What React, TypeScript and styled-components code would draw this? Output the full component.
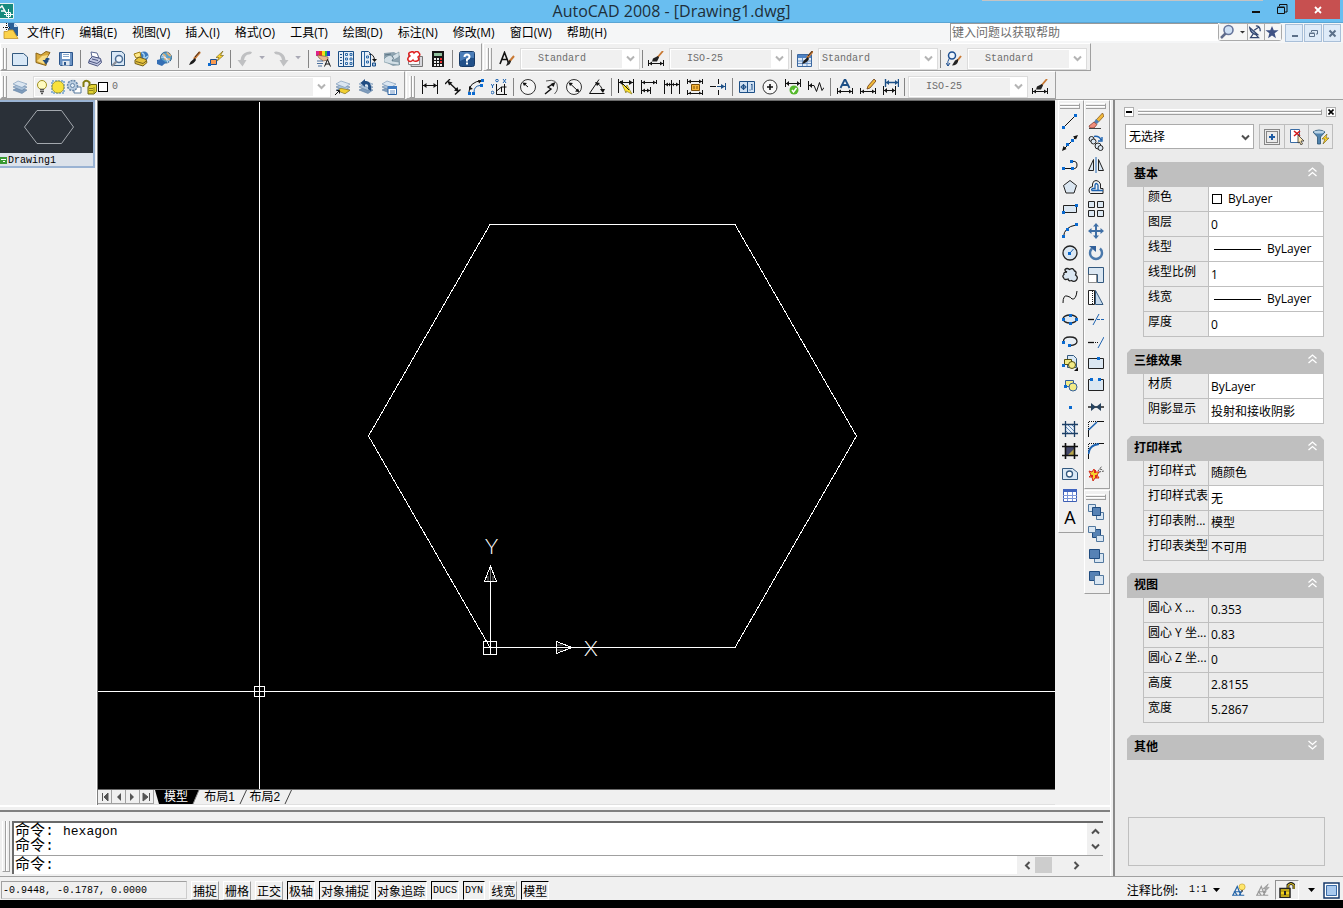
import React from 'react';
import styled, { createGlobalStyle, css } from 'styled-components';

const ui = '"Open Sans", "Noto Sans CJK SC", sans-serif';
const mono = '"Liberation Mono", "Noto Sans CJK SC", monospace';
const song = '"Noto Sans CJK SC", sans-serif';
const face = '#f0f0f0';
const edge = '#a0a0a0';

const GlobalStyle = createGlobalStyle`
  * { box-sizing: border-box; }
  html, body { margin: 0; padding: 0; background: ${face}; }
  button, input, select { font: inherit; color: inherit; margin: 0; padding: 0; border-radius: 0; }
  svg { display: block; flex: none; }
`;

/* ---------- icon drawings, all on a 16 x 16 grid ---------- */

const sheet = { fill: '#d9e8f6', stroke: '#33597f' };
const ink = { fill: 'none', stroke: '#111' };
const blue = { fill: 'none', stroke: '#1c62b0' };
const dot = (x: number, y: number) => (
  <rect key={`${x}-${y}`} x={x} y={y} width="3" height="3" fill="#0a6ad0" />
);
const brush = (
  <>
    <path d="M15 1L9 8" stroke="#c87832" strokeWidth="2.4" />
    <path d="M14.5 .8L10 6" stroke="#3a2a20" strokeWidth="1" />
    <path d="M10 7L7.600 9Q5.500 10 4 14Q9 13 11 9z" fill="#1b1b1b" />
  </>
);
const layers = (
  <>
    <path d="M1 11l5-2.500 9 2.500-5 3.500z" fill="#7f9cbc" stroke="#5f7fa3" strokeWidth=".6" />
    <path d="M1 8l5-2.500 9 2.500-5 3.500z" fill="#a9c0d8" stroke="#5f7fa3" strokeWidth=".6" />
    <path d="M1 5l5-3 9 3-5 3.500z" fill="#dbe6f1" stroke="#7090b2" strokeWidth=".6" />
  </>
);
const dimArrow = (
  <>
    <path d="M.5 9v6M15.500 9v6M1 12.500h14" {...ink} />
    <path d="M1 12.500l3-2v4zM15 12.500l-3-2v4z" fill="#111" />
  </>
);
const cloud =
  'M5 5Q2.500 4 3 2.500Q5 .5 7.500 2.500Q11 0 12.500 4Q15 4.500 13.500 8Q16.500 10 14.500 13Q12 15.500 9.500 13.500Q6.500 14.500 6 12Q2 13.500 1.500 10.500Q0 9 2 7.500Q1 5 5 5z';

const icons: Record<string, React.ReactNode> = {
  fresh: <path d="M.5 2.500h11l4 3.500v8.500H.5z" {...sheet} />,
  open: (
    <>
      <path d="M1 2l5 2 5-3.500 4 1-3 5-1 8-10-3z" fill="#d7a83a" stroke="#8a6418" />
      <path d="M2 10l5-5 6-1-4 9z" fill="#f7dc87" />
      <path d="M15 8q-4-3-5 1H7.500l3.500 4.500L14 9.500h-1.500z" fill="#244d7e" />
    </>
  ),
  save: (
    <>
      <path d="M1.500 1.500h13v13h-12l-1-1z" fill="#6b93c4" stroke="#2c568c" />
      <path d="M4 2h8v6H4z" fill="#fff" />
      <path d="M5 3.500h6M5 5.500h6" stroke="#8aa9cc" />
      <path d="M4.500 10h7v4.500h-7z" fill="#dfe7f0" />
      <path d="M6 11h2v3H6z" fill="#2c568c" />
    </>
  ),
  print: (
    <>
      <path d="M4 1l6 1 2 5-7-1z" fill="#fff" stroke="#5d6a92" />
      <path d="M2.500 8.500l3-3 8 2 1 4-4 3.500-9-3z" fill="#c3c9e2" stroke="#4a5480" />
      <path d="M2 10l8 2.500 4-3M5 8l6 1.500" stroke="#4a5480" fill="none" />
    </>
  ),
  preview: (
    <>
      <path d="M1.500 .5h10l3 2.500v11.500h-13z" {...sheet} />
      <circle cx="9" cy="8" r="3.500" fill="#eef6fd" stroke="#4b6d95" strokeWidth="1.500" />
      <path d="M6.500 10.500L2 15" stroke="#8b8f99" strokeWidth="2.400" />
    </>
  ),
  publish: (
    <>
      <circle cx="11" cy="5" r="4.500" fill="#3c78bb" />
      <path d="M9 2q3 1 2 4t4-1" stroke="#a6d3f0" strokeWidth="1.500" fill="none" />
      <path d="M1 3l6-2 1 5-5 1z" fill="#ffe98a" stroke="#a07d10" />
      <path d="M2 9l4-3 7 2.500 1 3-4 3.500-8-2.500z" fill="#e6c33e" stroke="#75601c" />
      <path d="M3 10.500l7 2 4-3" stroke="#75601c" fill="none" />
    </>
  ),
  web: (
    <>
      <circle cx="10" cy="6.500" r="5.500" fill="#58a1cc" stroke="#35688f" />
      <path d="M7 3q3 2 2 4t5 1M11 1.500q2 3 4 3" fill="none" stroke="#d8b17d" strokeWidth="2" />
      <path d="M5 6q6 0 9 5M6 4q5 2 6 8" stroke="#eef" fill="none" strokeWidth=".8" />
      <path d="M1 9l4-1 5 3.500-4 3.500-5-2z" fill="#356fb5" />
    </>
  ),
  match: brush,
  block: (
    <>
      <path d="M15 0L8 6.500h3L8.500 10.500 15.500 4.500h-3z" fill="#ffd42a" stroke="#6d5a10" strokeWidth=".6" />
      <path d="M2.500 8.500h6v5h-6z" fill="#f79a50" stroke="#1d4f91" />
      {dot(0, 12)}
    </>
  ),
  undo: <path d="M15 1.500Q14 0 10 1 4 3 3.500 9H.5l5 6.500L9.500 9H7Q8 3.500 12 3.500q2 0 3-2z" fill="#bfc0c2" />,
  redo: <path d="M1 1.500Q2 0 6 1q6 2 6.500 8h3l-5 6.500L6.500 9H9Q8 3.500 4 3.500q-2 0-3-2z" fill="#bfc0c2" />,
  caret: <path d="M4 5h7l-3.500 4z" fill="#a9a9b5" />,
  properties: (
    <>
      <path d="M1 0h3v5H1z" fill="#e0218a" />
      <path d="M4 0h3v5H4z" fill="#e53a1e" />
      <path d="M7 0h3v5H7z" fill="#f3e11b" />
      <path d="M10 0h2v5h-2z" fill="#27b34b" />
      <path d="M12 0h3v5h-3z" fill="#2336d8" />
      <path d="M2 4l6 1 5 1v3l-5 1-4-3z" fill="#e9b98f" stroke="#6a4a36" strokeWidth=".6" />
      <path d="M2 10h6M2 12.500h6M3 15h4" stroke="#4a6f9d" />
      <path d="M9.500 15.500l3-7 3 7M10.500 13h4" {...ink} />
    </>
  ),
  center: (
    <>
      <path d="M.5.5h15v15H.5z" fill="#e7eff8" stroke="#1c4f86" />
      <path d="M5.500 1v14" stroke="#1c4f86" />
      <path d="M2 3.500h2M2 6.500h2M2 9.500h2M2 12.500h2" stroke="#1c4f86" />
      <path d="M7.500 2.500h2v2h-2zM12 2.500h2v2h-2zM7.500 7h2v2h-2zM12 7h2v2h-2zM7.500 11.500h2v2h-2zM12 11.500h2v2h-2z" fill="none" stroke="#2f6ba8" />
    </>
  ),
  palettes: (
    <>
      <path d="M.5.5h7l2 2v13h-9z" fill="#e7eff8" stroke="#1c4f86" />
      <path d="M3.500 1v14M5.500 5h2v2h-2zM5.500 10h2v2h-2z" fill="none" stroke="#2f6ba8" />
      <path d="M8 3q5 0 5.500 6" {...ink} />
      <path d="M11 8h5l-2.500 3z" fill="#111" />
      <path d="M11.500 12h3v3h-3z" fill="#9ec0e3" stroke="#1c4f86" />
    </>
  ),
  sheets: (
    <>
      <path d="M0 2l10-1 6 4v9l-7 1-9-5z" fill="#8fa3b0" />
      <path d="M0 8q4-5 8-3l7-4v5L8 10l7 1v3l-8-1-7-2z" fill="#d3dfe6" stroke="#63808f" strokeWidth=".5" />
      <path d="M8 5q3 2 0 5M1 4l6-1" stroke="#5b7484" fill="none" />
    </>
  ),
  markup: (
    <>
      <path d="M4.500 5.500h11v10H4z" fill="#d7d7dc" stroke="#777" />
      <path d="M1.500 3v10.500h11V3z" fill="#fafafa" stroke="#888" />
      <path d="M3 5q-3-3 1-4 2-1 3 1 3-3 5 0 2 2-1 4 2 3-1 4-3 1-4-1-3 3-5 0-1-2 2-4z" fill="#fff" stroke="#e02020" strokeWidth="1.500" />
    </>
  ),
  calc: (
    <>
      <path d="M2 0h12v16H2z" fill="#161616" />
      <path d="M4 2h8v3H4z" fill="#8fbf9c" />
      <path d="M4 7h2v2H4zM7 7h2v2H7zM4 10h2v2H4zM7 10h2v2H7zM4 13h2v2H4zM7 13h2v2H7zM10 13h2v2h-2z" fill="#eee" />
      <path d="M10 7h2v2h-2zM10 10h2v2h-2z" fill="#e33" />
    </>
  ),
  help: (
    <>
      <rect x=".5" y=".5" width="15" height="15" rx="2" fill="#215089" stroke="#173a66" />
      <path d="M1 1h14v6Q8 6 1 10z" fill="#4a7db8" />
      <path d="M5.500 6Q5.500 3.500 8 3.500T10.500 6Q10.500 7.500 8 8.500V10.500M8 11.500v2" fill="none" stroke="#fff" strokeWidth="2" />
    </>
  ),
  textStyle: (
    <>
      <path d="M1 13L5.500 1.500 10 13M2.500 8.500h6" {...ink} strokeWidth="1.600" />
      <path d="M15 5l-5 6" stroke="#c87832" strokeWidth="2" />
      <path d="M11 9l-2 1.500-2 4.500q4-1 5-4.500z" fill="#222" />
    </>
  ),
  dimStyle: (
    <>
      <path d="M15 0L9 7" stroke="#c87832" strokeWidth="1.800" />
      <path d="M10 5L5 7.500 4 10.500h5l2-4z" fill="#222" />
      {dimArrow}
    </>
  ),
  tableStyle: (
    <>
      <path d="M.5 3.500h14v12H.5z" fill="#dfeaf7" stroke="#3c68a0" />
      <path d="M1 4h13v3H1z" fill="#4f83c4" />
      <path d="M5.500 7v8M10 7v8M1 10h13M1 12.500h13" stroke="#6d94c5" />
      <g transform="translate(1 -1)">{brush}</g>
    </>
  ),
  leaderStyle: (
    <>
      <circle cx="6" cy="4.500" r="3.500" fill="#eef5fc" stroke="#1d4f91" strokeWidth="1.500" />
      <path d="M3.500 7Q1 10 2 15M0 12l2 3 2-3" fill="none" stroke="#1d4f91" />
      <path d="M15 5l-4 5" stroke="#c87832" strokeWidth="2" />
      <path d="M12 8l-3 1.500-3 5q5 0 6-4z" fill="#222" />
    </>
  ),
  layers,
  bulb: (
    <>
      <circle cx="8" cy="6" r="4.500" fill="#fffbc0" stroke="#a09020" />
      <path d="M6 10.500h4M6 12.500h4M7 14.500h2" stroke="#555" strokeWidth="1.500" />
    </>
  ),
  sun: (
    <>
      <path d="M2 2h12v12H2z" fill="none" stroke="#2f7bbd" strokeDasharray="2 1" />
      <circle cx="8" cy="8" r="6" fill="#f8e23c" stroke="#9c9a3a" />
    </>
  ),
  freeze: (
    <>
      <path d="M8 8h7v6H8z" fill="#fff" stroke="#57789c" />
      <circle cx="6.500" cy="6.500" r="5" fill="#b9cde1" stroke="#6585a8" strokeDasharray="2 1" strokeWidth="1.500" />
      <circle cx="6.500" cy="6.500" r="2" fill="#e4eef7" stroke="#6585a8" />
    </>
  ),
  unlock: (
    <>
      <path d="M1.500 8V3.500Q4 0 7.500 3.500V8" fill="none" stroke="#817b10" strokeWidth="2" />
      <path d="M6 7.500l3-2h5.500v7L12 15H6z" fill="#e2d233" stroke="#6b6410" />
      <path d="M12 8v6M7 9.500h4M7 11.500h4" stroke="#8d851a" />
    </>
  ),
  layerCurrent: (
    <>
      {layers}
      <path d="M4 10.500l2-1.200 9 2-5 3.500-5-2z" fill="#f1cf32" stroke="#8c7416" strokeWidth=".6" />
      <path d="M0 16l4-4M1.500 11.500h3v3" {...ink} />
    </>
  ),
  layerPrevious: (
    <>
      {layers}
      <path d="M13 12Q14 1 7 2l0-2-4.500 4L7 8V5.500Q11 4 10 10z" fill="#204c82" />
    </>
  ),
  layerStates: (
    <>
      {layers}
      <path d="M7 7.500h8.500v8H7z" fill="#fff" stroke="#2a62a5" />
      <path d="M7 7h9v3H7z" fill="#3c78c0" />
      <path d="M9 12h5M9 14h5" stroke="#6d94c5" />
    </>
  ),
  linear: (
    <>
      <path d="M.5 1v14M15.500 1v14M1 6.500h14" {...ink} />
      <path d="M1 6.500L4.500 4v5zM15 6.500L11.500 4v5z" fill="#111" />
    </>
  ),
  aligned: (
    <>
      <path d="M0 5l5-5M10 15.500l5.500-5M3.500 3L13 12" {...ink} strokeWidth="1.300" />
      <path d="M2.500 2l5 1.500-3.500 3zM14 13L9 11.500 12.500 8z" fill="#111" />
    </>
  ),
  arcLength: (
    <>
      <path d="M1 13Q1 3 14 1.500" {...ink} />
      <path d="M6 13q0-6 6-6.500" {...blue} />
      <path d="M1 11l0-4 4 3zM10 1l4 .5-3 3z" fill="#111" />
      {dot(0, 13)}{dot(4, 13)}{dot(12, 5)}{dot(13, 0)}
    </>
  ),
  ordinate: (
    <>
      <path d="M5.500 5v10.500h10.500M5.500 12l5-4h5M10.500 8v5M13.500 5v10" {...ink} />
      <path d="M0 5l1.500 2L3 5M1.500 7v2M12 0l3 4M15 0l-3 4" {...blue} />
      <circle cx="1.500" cy="13.500" r="1.300" {...blue} />
      <circle cx="6" cy="1.500" r="1.300" {...blue} />
    </>
  ),
  radius: (
    <>
      <circle cx="8" cy="8" r="7.500" fill="#fff" fillOpacity=".4" stroke="#333" />
      <path d="M8 8L4 4.500" {...ink} />
      <path d="M2.500 3.500l4.500.5-3 3z" fill="#111" />
    </>
  ),
  jogged: (
    <>
      <path d="M3 2Q15-1 14.500 9q0 3-3 6" fill="none" stroke="#555" />
      <path d="M2 15l6-5-3-2 5-3" {...ink} strokeWidth="1.400" />
      <path d="M12.500 3l-2 5-3-3z" fill="#111" />
    </>
  ),
  diameter: (
    <>
      <circle cx="8" cy="8" r="7.500" fill="#fff" fillOpacity=".4" stroke="#333" />
      <path d="M4 4.500l8 7.500" {...ink} />
      <path d="M2.500 3.500l4.500.5-3 3zM13.500 13l-4.500-.5 3-3z" fill="#111" />
    </>
  ),
  angular: (
    <>
      <path d="M10 .5L.5 14.500h15M7 4q6 2 6.500 9" {...ink} />
      <path d="M6 3l5 1-3 3zM14 14l-3-4h5z" fill="#111" />
    </>
  ),
  quick: (
    <>
      <path d="M3 3l5 5 1-2 5 9-6-3 0 2z" fill="#ffe32d" stroke="#7c6d0d" strokeWidth=".6" />
      <path d="M.5 0v14M15.500 0v14M1 3.500h14M2 2l9 9" {...ink} />
      <path d="M1 3.500L5 1v5zM15 3.500L11 1v5z" fill="#111" />
    </>
  ),
  baseline: (
    <>
      <path d="M.5 1v14M15.500 1v4M1 3.500h14M9.500 8v7M1 11.500h8" {...ink} />
      <path d="M1 3.500l3-2v4zM15 3.500l-3-2v4zM1 11.500l3-2v4zM9 11.500l-3-2v4z" fill="#111" />
    </>
  ),
  continued: (
    <>
      <path d="M.5 1v14M7.500 1v14M15.500 1v14M1 5.500h14" {...ink} />
      <path d="M1 5.500l3-2v4zM7 5.500l-2-2v4zM8 5.500l2-2v4zM15 5.500l-3-2v4z" fill="#111" />
    </>
  ),
  space: (
    <>
      <path d="M.5 0v5M15.500 0v5M1 2.500h14M.5 11v5M15.500 11v5M1 14.500h14" {...ink} />
      <path d="M1 2.500l3-2v4zM15 2.500l-3-2v4zM1 14.500l3-2v3zM15 14.500l-3-2v3z" fill="#111" />
      <path d="M4.500 5.500h8v6h-8z" fill="#f5b53a" stroke="#7a4e09" />
      <path d="M7 7v3M10 7v3" stroke="#7a4e09" />
    </>
  ),
  breakDim: (
    <>
      <path d="M8.500 0v5M8.500 11v5M0 7.500h6" {...ink} />
      <path d="M7 7.500h8M15.500 4v7" stroke="#1c4f86" />
      <path d="M15 7.500l-4-2.500v5z" fill="#1c4f86" />
    </>
  ),
  tolerance: (
    <>
      <path d="M.5 2.500h15v11H.5z" fill="#cfe0f2" stroke="#1c4f86" />
      <path d="M8.500 3v10" stroke="#1c4f86" />
      <circle cx="4.500" cy="8" r="2" fill="none" stroke="#1c4f86" />
      <path d="M1.500 8h6M4.500 5v6M10.500 11h1M12 6l1-1v6" fill="none" stroke="#1c4f86" />
    </>
  ),
  centerMark: (
    <>
      <circle cx="8" cy="8" r="7" fill="#f8f8f8" stroke="#333" />
      <path d="M8 5v6M5 8h6" stroke="#111" strokeWidth="1.600" />
    </>
  ),
  inspect: (
    <>
      <path d="M.5 0v8M15.500 0v8M1 4.500h14" {...ink} />
      <path d="M1 4.500L4 2v5zM15 4.500L12 2v5z" fill="#111" />
      <circle cx="9" cy="11" r="4.500" fill="#54b82c" />
      <path d="M7 11l1.500 2 3-4" fill="none" stroke="#fff" strokeWidth="1.500" />
    </>
  ),
  jogLine: (
    <>
      <path d="M.5 2v9M1 6.500h5l2.500 6 3-9 2.500 8 2-3" {...ink} />
      <path d="M1 6.500L4 4v5z" fill="#111" />
    </>
  ),
  dimEdit: (
    <>
      <path d="M3.500 9L8 0l4.500 9M5 6h6" fill="none" stroke="#1c4f86" strokeWidth="1.800" />
      {dimArrow}
    </>
  ),
  dimTextEdit: (
    <>
      <path d="M14 0L8 7l-1 3 3-1 6-7z" fill="#f0b83a" stroke="#6a3b12" strokeWidth=".8" />
      {dimArrow}
    </>
  ),
  dimUpdate: (
    <>
      <path d="M2.500 0v8M15.500 0v8M3 3.500h12" fill="none" stroke="#1c4f86" strokeWidth="1.400" />
      <path d="M3 3.500L6 1v5zM15 3.500L12 1v5z" fill="#1c4f86" />
      <path d="M.5 7v9M12.500 7v9M1 11.500h11" {...ink} />
      <path d="M1 11.500L4 9v5zM12 11.500L9 9v5z" fill="#111" />
    </>
  ),
  line: <><path d="M2 14L14 2" {...ink} />{dot(0, 13)}{dot(12, 1)}</>,
  xline: (
    <>
      <path d="M1 15L15 1" {...ink} />
      <path d="M0 16l1.500-5 3 3zM16 0l-5 1.500 3 3z" fill="#111" />
      {dot(4, 8)}{dot(9, 4)}
    </>
  ),
  pline: (
    <>
      <path d="M1 11.500h8M10 4.500q5-1 5 3.500t-5 3.500" {...ink} />
      {dot(0, 10)}{dot(9, 10)}{dot(8, 3)}
    </>
  ),
  polygon: <path d="M8 1.500l6.500 5-2.500 7.500H4L1.500 6.500z" fill="#dbe7f2" stroke="#222" />,
  rect: <><path d="M1.500 4.500h13v7h-13z" fill="#dbe7f2" stroke="#222" />{dot(0, 10)}{dot(13, 3)}</>,
  arc: <><path d="M1.500 14Q2 4 14 2" {...ink} />{dot(0, 12)}{dot(4, 5)}{dot(13, 0)}</>,
  circle: (
    <>
      <circle cx="8" cy="8" r="7" fill="#dbe7f2" stroke="#222" strokeWidth="1.300" />
      <path d="M8 8l3.500-4" {...blue} />{dot(6, 7)}
    </>
  ),
  revcloud: <path d={cloud} fill="#dbe7f2" stroke="#222" strokeWidth="1.300" />,
  spline: <path d="M1 14Q1 6 5 7t5 3Q14 11 15 2" {...ink} />,
  ellipse: (
    <>
      <ellipse cx="8" cy="8" rx="7" ry="4" fill="#dbe7f2" stroke="#222" strokeWidth="1.300" />
      {dot(0, 7)}{dot(13, 7)}{dot(7, 3)}{dot(7, 11)}
    </>
  ),
  ellipseArc: (
    <>
      <path d="M1.500 9Q1 4 8 4t7 4.500Q15 12 8 12.500" fill="#e9eff5" stroke="#222" strokeWidth="1.300" />
      {dot(0, 8)}{dot(6, 11)}
    </>
  ),
  insert: (
    <>
      <path d="M5.500.5h6l3 3v9h-9z" {...sheet} />
      <path d="M2.500 4.500h7v5h-7z" fill="#f2eb86" stroke="#55500f" />
      <circle cx="10" cy="10" r="3.500" fill="#f2eb86" stroke="#55500f" />
      <path d="M16 12v4h-4z" fill="#111" />
      {dot(0, 9)}
    </>
  ),
  makeBlock: (
    <>
      <path d="M3.500 3.500h8v6h-8z" fill="#f2eb86" stroke="#33609a" />
      <circle cx="11" cy="10" r="4" fill="#f2eb86" stroke="#33609a" />
      {dot(2, 8)}
    </>
  ),
  point: dot(7, 7),
  hatch: (
    <>
      <path d="M3 3h10v10H3z" fill="#e7eff8" />
      <path d="M3 5l8 8M3 9l4 4M5 3l8 8M9 3l4 4" stroke="#3c6fa8" strokeWidth=".8" />
      <path d="M3.500 0v16M12.500 0v16M0 3.500h16M0 12.500h16" stroke="#1c3f66" strokeWidth="1.300" />
    </>
  ),
  gradient: (
    <>
      <path d="M3 3h10v10H3z" fill="#44486a" />
      <path d="M5 13l8-8v8z" fill="#b6a54b" />
      <path d="M3.500 0v16M12.500 0v16M0 3.500h16M0 12.500h16" stroke="#111" strokeWidth="1.600" />
    </>
  ),
  region: (
    <>
      <path d="M.5 3.500h10l5 4v7H.5z" {...sheet} />
      <circle cx="7.500" cy="9" r="3" fill="#fff" stroke="#33597f" strokeWidth="1.300" />
    </>
  ),
  table: (
    <>
      <path d="M1.500 2.500h13v12h-13z" fill="#fff" stroke="#3d5fb4" />
      <path d="M1 2h14v3H1z" fill="#4065c0" />
      <path d="M1 8.500h14M1 11.500h14M5.500 5v9M10.500 5v9" stroke="#7d97d8" />
    </>
  ),
  erase: (
    <>
      <path d="M14.500 0L8 7l2.500 2L16 3z" fill="#f0b83a" stroke="#7b4c16" strokeWidth=".7" />
      <path d="M8 6l3 2.500-2 2.500-3-2z" fill="#4f7fb4" />
      <path d="M6 9l3 2.500L6 15H2l-1-2z" fill="#ef8d7c" stroke="#7a2c20" strokeWidth=".7" />
      <path d="M1 15.500h12" stroke="#444" />
    </>
  ),
  copy: (
    <>
      <circle cx="3.500" cy="4" r="2.500" fill="#dbe7f2" stroke="#222" />
      <circle cx="5.500" cy="6.500" r="2.500" fill="#dbe7f2" stroke="#222" />
      <circle cx="10" cy="11" r="3" fill="#dbe7f2" stroke="#222" />
      <circle cx="12.500" cy="13" r="2.500" fill="#dbe7f2" stroke="#222" />
      <path d="M6 1.500q5-1 7 3.500M14 2v4h-4" fill="none" stroke="#1c62b0" strokeWidth="1.400" />
    </>
  ),
  mirror: (
    <>
      <path d="M5.500 2.500v11h-5zM10.500 2.500v11h5z" fill="#dbe7f2" stroke="#222" />
      <path d="M8 0v16" {...blue} />
    </>
  ),
  offset: (
    <>
      <path d="M2.500 14.500h12.500v-5h-2.500V5Q11 1.500 8 1.500T4.500 5v2.500Q1 8 1 11t1.500 3.500z" fill="none" stroke="#222" />
      <path d="M15 11.500H10V6Q8 3 7 6v3.500H4.500Q3 10.500 4 11.500H10" fill="none" stroke="#1c62b0" strokeWidth="1.300" />
    </>
  ),
  array: <path d="M.5.5h6v6h-6zM9.500.5h6v6h-6zM.5 9.500h6v6h-6zM9.500 9.500h6v6h-6z" fill="#dbe7f2" stroke="#222" />,
  move: (
    <path d="M8 0l3 3.500H9v3.500h3.500V5L16 8l-3.500 3V9H9v3.500h2L8 16l-3-3.500h2V9H3.500v2L0 8l3.500-3v2H7V3.500H5z" fill="#3f6fa6" />
  ),
  rotate: (
    <>
      <path d="M4 3.500a6 6 0 1 0 8 0" fill="none" stroke="#4a78ab" strokeWidth="2.400" />
      <path d="M1 1h7v6z" fill="#31609a" />
    </>
  ),
  scale: (
    <>
      <path d="M.5.5h15v15H9.500v-8h-9z" fill="#dbe7f2" stroke="#33597f" />
      <path d="M.5 7.500h8v8h-8z" fill="#fff" stroke="#222" strokeDasharray="1 1" />
    </>
  ),
  stretch: (
    <>
      <path d="M.5 1.500h6v14h-6z" fill="#fff" stroke="#222" />
      <path d="M7.500 1.500l7.500 14H7.500z" fill="#c7dbee" stroke="#33597f" />
      <path d="M4.500 2v13" stroke="#222" strokeDasharray="1 1" />
    </>
  ),
  trim: (
    <>
      <path d="M0 8.500h6" {...ink} strokeWidth="1.300" />
      <path d="M5 14l6-11" {...blue} />
      <path d="M9 8.500h7" {...blue} strokeDasharray="3 1" />
    </>
  ),
  extend: (
    <>
      <path d="M0 9.500h6" {...ink} strokeWidth="1.300" />
      <path d="M7 9.500h4" {...ink} strokeDasharray="1 1" />
      <path d="M10 15l6-11" {...blue} />
    </>
  ),
  breakPoint: <><path d="M.5 3.500h15v10H.5z" fill="#dbe7f2" stroke="#222" />{dot(9, 2)}</>,
  breakGap: <><path d="M3 2.500H.5v11h15v-11H13" fill="#dbe7f2" stroke="#222" />{dot(2, 1)}{dot(10, 1)}</>,
  join: (
    <>
      <path d="M0 8h16" stroke="#222" strokeWidth="1.500" />
      <path d="M3 4l5 4-5 4zM13 4L8 8l5 4z" fill="#27435f" />
    </>
  ),
  chamfer: (
    <>
      <path d="M.5 16V9M9 .5h7" {...ink} />
      <path d="M.5 8V.5H8" {...ink} strokeDasharray="1 1" />
      <path d="M.5 9L9 1" {...blue} strokeWidth="1.500" />
    </>
  ),
  fillet: (
    <>
      <path d="M.5 16V9M9 .5h7" {...ink} />
      <path d="M.5 8V.5H8" {...ink} strokeDasharray="1 1" />
      <path d="M.5 11Q1 2 11 1" {...blue} strokeWidth="1.800" />
    </>
  ),
  explode: (
    <>
      <path d="M1 6l3 1 2-3 1 3 4 0-2 3 2 3-4 0-2 3-1-4-3 0 2-2z" fill="#f6d32b" stroke="#d3281c" />
      <path d="M6 5h2v3H6zM3 10h2v2H3zM7 10h2v3H7z" fill="#e2291d" />
      <path d="M10 6l4-5M11 7l5-1M12 4l3 1" stroke="#555" strokeDasharray="2 1" />
    </>
  ),
  toFront: (
    <>
      <path d="M.5.5h7v7h-7zM8.500 8.500h7v7h-7z" fill="#d9e6f2" stroke="#52789f" />
      <path d="M4.500 3.500h8v8h-8z" fill="#5682b5" stroke="#1f4c80" />
    </>
  ),
  toBack: (
    <>
      <path d="M4.500 3.500h8v8h-8z" fill="#5682b5" stroke="#1f4c80" />
      <path d="M.5.5h7v6h-7zM8.500 9.500h7v6h-7z" fill="#d9e6f2" stroke="#52789f" />
    </>
  ),
  above: (
    <>
      <path d="M6.500 5.500h9v9h-9z" fill="#d9e6f2" stroke="#52789f" />
      <path d="M1.500 1.500h10v9h-10z" fill="#5682b5" stroke="#1f4c80" />
    </>
  ),
  under: (
    <>
      <path d="M1.500 1.500h10v9h-10z" fill="#5682b5" stroke="#1f4c80" />
      <path d="M6.500 5.500h9v9h-9z" fill="#d9e6f2" stroke="#52789f" />
    </>
  ),
  document: (
    <>
      <path d="M5 0h6l4 4v9H5z" fill="#2c5f96" />
      <path d="M11 0l4 4h-4z" fill="#d5e4f3" />
      <path d="M3.500 0v8M0 4.500h7" stroke="#fff" />
      <path d="M3.500 0v8M0 4.500h7" stroke="#111" strokeDasharray="1 1" />
      <path d="M1 8.500h3l2-1.500h4l5 8.500H1z" fill="#fbd24a" stroke="#c2922a" strokeWidth=".8" />
    </>
  ),
  search: (
    <>
      <circle cx="9.500" cy="6" r="4.500" fill="#cfe0f5" stroke="#66759b" strokeWidth="1.600" />
      <path d="M6.500 9.500L2 14" stroke="#5f6b8b" strokeWidth="2.500" />
    </>
  ),
  satellite: (
    <>
      <path d="M2 3q1 8 9 8z" fill="#9fb4d6" stroke="#33466f" strokeWidth="1.500" />
      <path d="M7 6l6-4M9 1q5 0 5 6M6 10l-3 4.500h9L9 11" fill="none" stroke="#33466f" strokeWidth="1.500" />
    </>
  ),
  star: <path d="M8 1l2 5h5.500l-4.500 3.500 1.500 5.500L8 12l-4.500 3 1.500-5.500L.5 6H6z" fill="#3f5284" />,
  pick: (
    <>
      <path d="M.5.5h15v15H.5zM2.500 2.500h11v11h-11z" fill="none" stroke="#222" strokeDasharray="1 1" />
      <path d="M8 5v6M5 8h6" stroke="#1d5ba3" strokeWidth="2" />
    </>
  ),
  select: (
    <>
      <path d="M1.500.5h9v13h-9z" fill="#fff" stroke="#3a6ca4" />
      <path d="M5 2l6 5M11 2L5 7" stroke="#d01818" strokeWidth="1.600" />
      <path d="M9 6l6 6h-3l1.500 3-1.500 1-1.500-3L9 14z" fill="#ffe9b0" stroke="#333" strokeWidth=".8" />
    </>
  ),
  quickSelect: (
    <>
      <path d="M0 3q6-4 12 0L7.500 8v7h-3V8z" fill="#4f82ad" stroke="#27506f" strokeWidth=".8" />
      <ellipse cx="6" cy="3" rx="5" ry="1.500" fill="#b9d3e6" />
      <path d="M14 5l-5 5h3l-2 5 6-6h-3z" fill="#ffd42a" stroke="#6d5a10" strokeWidth=".6" />
    </>
  ),
  annoBulb: (
    <>
      <path d="M1 14L6 4l4 10M0 14h6l-3-4h8l-3 4h6" fill="none" stroke="#2263a8" strokeWidth="1.300" />
      <circle cx="11.500" cy="4.500" r="3.500" fill="#ffe66b" stroke="#c09a20" strokeWidth=".7" />
      <path d="M10.500 9h2" stroke="#555" strokeWidth="2" />
    </>
  ),
  annoOff: (
    <>
      <path d="M1 14L6 4l4 10M0 14h6l-3-4h8l-3 4h6" fill="none" stroke="#999" strokeWidth="1.300" />
      <path d="M14 1L8 6.500l3 .5-2 4 6-6h-3z" fill="#aaa" stroke="#888" strokeWidth=".6" />
    </>
  ),
  lock: (
    <>
      <path d="M9 7V3q3-3 6 0v4" fill="none" stroke="#222" strokeWidth="3" />
      <path d="M9 7V3q3-3 6 0v4" fill="none" stroke="#f0d11c" strokeWidth="1" />
      <path d="M1 6.500h10v9H1z" fill="#f0d11c" stroke="#222" strokeWidth="1.500" />
      <path d="M2 9h8M2 13h8" stroke="#8a7408" />
      <path d="M5 9h2v4H5z" fill="#222" />
    </>
  ),
};

const Glyph = ({ name, size = 16 }: { name: string; size?: number }) => (
  <svg width={size} height={size} viewBox="0 0 16 16" aria-hidden="true">{icons[name]}</svg>
);

/* ---------- frame ---------- */

const Frame = styled.div`
  display: flex;
  flex-direction: column;
  min-height: 100vh;
  background: ${face};
  font: 12px/16px ${ui};
  color: #000;
`;

const TitleBar = styled.header`
  position: relative;
  display: flex;
  justify-content: space-between;
  height: 23px;
  background: #69bef0;
  border-bottom: 1px solid #5aa5d4;
  &::after {
    content: '';
    position: absolute;
    top: 0;
    right: 80px;
    width: 281px;
    height: 1px;
    background: #c4c4c4;
  }
`;

const Title = styled.h1`
  position: absolute;
  inset: 0;
  margin: 0;
  font: 400 16px/23px ${ui};
  text-align: center;
  color: #1e2f3a;
`;

const AppMark = styled.svg`
  margin-top: 3px;
`;

const WindowButtons = styled.div`
  position: relative;
  display: flex;
  padding-right: 3px;
`;

const WindowButton = styled.button<{ $close?: boolean }>`
  display: grid;
  place-items: center;
  width: ${p => (p.$close ? 45 : 26)}px;
  height: 19px;
  border: 0;
  background: ${p => (p.$close ? '#c75050' : 'transparent')};
`;

const MenuBar = styled.div`
  display: flex;
  align-items: stretch;
  height: 20px;
  padding-right: 1px;
  background: #f5f6f7;
`;

const Menus = styled.nav`
  display: flex;
  flex: 1;
  gap: 1px;
  padding-left: 3px;
`;

const MenuItem = styled.button`
  height: 19px;
  padding: 0 7px;
  border: 0;
  background: none;
  line-height: 18px;
  white-space: nowrap;
`;

const HelpField = styled.input`
  width: 268px;
  height: 18px;
  border: 0;
  border-top: 1px solid #999;
  border-left: 1px solid #999;
  background: #fff;
  padding: 0 1px;
  line-height: 16px;
  &::placeholder { color: #6d6d6d; opacity: 1; }
`;

const InfoButtons = styled.div`
  display: flex;
  height: 18px;
  margin: 0 3px 0 0;
  border: 1px solid #aaa;
  border-radius: 3px;
`;

const InfoButton = styled.button<{ $wide?: boolean }>`
  display: flex;
  align-items: center;
  width: ${p => (p.$wide ? 28 : 17)}px;
  overflow: hidden;
  border: 0;
  background: #f6f6f6;
  & + & { border-left: 1px solid #aaa; }
`;

const MdiButton = styled.button`
  display: grid;
  place-items: center;
  width: 18px;
  height: 18px;
  margin: 1px 1px 0 0;
  border: 1px solid #a9bfd8;
  background: #dfebf8;
`;

/* ---------- toolbars ---------- */

const ToolRow = styled.div`
  display: flex;
  height: 28px;
`;

const raised = css`
  border: 1px solid ${edge};
  border-top-color: #fff;
  border-left-color: #fff;
`;

const Bar = styled.div<{ $tail: number }>`
  ${raised}
  display: flex;
  align-items: center;
  margin-right: 1px;
  padding: 3px ${p => p.$tail}px 0 0;
`;

const Grip = styled.span<{ $inner?: boolean }>`
  width: 6px;
  height: 22px;
  margin: ${p => (p.$inner ? '0 3px 0 2px' : '0 1px 0 0')};
  border: 1px solid ${edge};
  border-left-color: #fff;
  border-top: 0;
  background: linear-gradient(90deg, ${face} 0 1px, ${edge} 1px 2px, #fff 2px 3px, ${face} 3px);
`;

const Tool = styled.button`
  display: flex;
  align-items: center;
  width: 23px;
  height: 22px;
  padding-left: 4px;
  border: 0;
  background: none;
`;

const Drop = styled.button`
  width: 13px;
  height: 22px;
  border: 0;
  background: none;
`;

const Divider = styled.span<{ $tight?: boolean }>`
  width: 1px;
  height: 18px;
  margin: ${p => (p.$tight ? '0 1px 0 2px' : '0 2px 0 3px')};
  background: #858585;
`;

const ComboBox = styled.label<{ $width: number }>`
  display: flex;
  align-items: center;
  width: ${p => p.$width}px;
  height: 22px;
  margin-left: 2px;
  border: 1px solid #dcdcdc;
  outline: 1px solid #fff;
  outline-offset: -2px;
`;

const ComboSelect = styled.select<{ $indent: number }>`
  flex: 1;
  min-width: 0;
  height: 20px;
  padding-left: ${p => p.$indent}px;
  border: 0;
  appearance: none;
  background: none;
  color: #6d6d6d;
  opacity: 1;
  font: 10px/18px ${mono};
`;

const ComboArrow = styled.span`
  display: grid;
  place-items: center;
  width: 17px;
  height: 20px;
  background: #fff;
`;

const Swatch = styled.span`
  width: 10px;
  height: 10px;
  border: 1px solid #000;
  background: #fff;
`;

const Chevron = ({ color = '#b4b4b4', turn = 0 }: { color?: string; turn?: number }) => (
  <svg width="9" height="9" viewBox="0 0 9 9" aria-hidden="true">
    <path d="M1 2.500l3.500 3.500L8 2.500" fill="none" stroke={color} strokeWidth="2" transform={`rotate(${turn} 4.500 4.500)`} />
  </svg>
);

const Combo = ({ label, value, width = 120, indent = 17, children }: {
  label: string; value: string; width?: number; indent?: number; children?: React.ReactNode;
}) => (
  <ComboBox $width={width}>
    {children}
    <ComboSelect $indent={indent} aria-label={label} disabled defaultValue={value}>
      <option>{value}</option>
    </ComboSelect>
    <ComboArrow><Chevron /></ComboArrow>
  </ComboBox>
);

const Tools = ({ items }: { items: string[] }) => (
  <>
    {items.map((name, i) =>
      name === '|' ? <Divider key={i} />
        : name === 'caret' ? <Drop key={i} aria-label="more"><Glyph name="caret" size={13} /></Drop>
          : <Tool key={i} aria-label={name}><Glyph name={name} /></Tool>,
    )}
  </>
);

/* ---------- body ---------- */

const Body = styled.div`
  display: flex;
  flex: 1;
  border-top: 1px solid ${edge};
`;

const Desk = styled.div`
  display: flex;
  flex: 1;
  flex-direction: column;
  min-width: 0;
  border-right: 1px solid #fff;
`;

const Workspace = styled.main`
  display: flex;
  flex: 1;
  border-bottom: 2px solid #fff;
`;

const Thumbs = styled.aside`
  width: 97px;
  border-right: 1px solid #fff;
`;

const Thumb = styled.button`
  display: block;
  width: 95px;
  border: 2px solid #9ab3d3;
  border-left: 0;
  background: #dce2ea;
  text-align: left;
`;

const ThumbPicture = styled.svg`
  width: 93px;
  height: 51px;
  background: #2a3038;
`;

const ThumbCaption = styled.span`
  display: flex;
  align-items: center;
  gap: 1px;
  height: 13px;
  font: 10px/13px ${mono};
  padding-top: 2px;
`;

const DrawingWindow = styled.section`
  display: flex;
  flex: 1;
  flex-direction: column;
  min-width: 0;
  border-top: 1px solid #696969;
  border-left: 1px solid #808080;
`;

const Canvas = styled.svg`
  flex: 1 1 0;
  width: 100%;
  height: 0;
  min-height: 300px;
  background: #000;
`;

const LayoutTabs = styled.div`
  display: flex;
  height: 16px;
  border-top: 1px solid #696969;
  border-bottom: 1px solid #e0e0e0;
`;

const TabNav = styled.button`
  display: grid;
  place-items: center;
  width: 14px;
  border: 1px solid ${edge};
  border-left: 0;
  border-top: 0;
  background: ${face};
`;

const Tab = styled.button<{ $active?: boolean }>`
  display: flex;
  align-items: center;
  height: 14px;
  padding: 0;
  border: 0;
  background: none;
  font: 12px/14px "Liberation Sans", "Noto Sans CJK SC", sans-serif;
  color: ${p => (p.$active ? '#fff' : '#000')};
`;

const TabLabel = styled.span<{ $active?: boolean }>`
  height: 14px;
  padding: 0 1px;
  background: ${p => (p.$active ? '#000' : 'transparent')};
`;

const Docks = styled.aside`
  display: flex;
  align-items: flex-start;
  padding-left: 3px;
`;

const DockColumn = styled.div`
  width: 26px;
`;

const Dock = styled.div`
  ${raised}
  display: flex;
  flex-direction: column;
  align-items: center;
  padding: 2px 2px 4px 0;
  & + & { margin-top: 1px; padding-top: 3px; }
`;

const DockGrip = styled.span`
  width: 20px;
  height: 6px;
  margin-bottom: 1px;
  border: 1px solid ${edge};
  border-top-color: #fff;
  border-left: 0;
  background: linear-gradient(${face} 0 1px, ${edge} 1px 2px, #fff 2px 3px, ${face} 3px);
`;

const DockTool = styled.button`
  display: grid;
  place-items: center;
  width: 22px;
  height: 22px;
  border: 0;
  background: none;
  font: 18px/20px ${ui};
`;

/* ---------- command line ---------- */

const CommandPane = styled.section`
  display: flex;
  height: 66px;
  margin-top: 3px;
  padding: 9px 7px 2px 2px;
  border-top: 2px solid #808080;
`;

const CommandGrip = styled.span`
  width: 8px;
  height: 51px;
  margin-right: 2px;
  border: 1px solid ${edge};
  border-top: 0;
  border-left-color: #fff;
  background: linear-gradient(90deg, ${face} 0 2px, ${edge} 2px 3px, #fff 3px 4px, ${face} 4px);
`;

const CommandBox = styled.div`
  flex: 1;
  min-width: 0;
  border-top: 2px solid #696969;
  border-left: 2px solid #696969;
  font: 13px/15px ${mono};
`;

const History = styled.div`
  display: flex;
  justify-content: space-between;
  height: 33px;
  padding-top: 1px;
  border-bottom: 1px solid ${edge};
  background: linear-gradient(#fff, #fff) no-repeat 0 0 / calc(100% - 16px) 100%;
`;

const HistoryLine = styled.div`
  height: 15px;
  white-space: pre;
`;

const Prompt = styled.span`
  font-size: 15px;
  padding-left: 1px;
`;

const ScrollColumn = styled.div`
  display: flex;
  flex-direction: column;
  align-items: center;
  justify-content: space-between;
  width: 16px;
  padding: 3px 0 4px;
`;

const EntryRow = styled.label`
  display: flex;
  align-items: center;
  height: 18px;
  background: #fff;
`;

const Entry = styled.input`
  flex: 1;
  border: 0;
  outline: 0;
  background: none;
`;

const HorizontalScroll = styled.div`
  display: flex;
  align-items: center;
  justify-content: space-between;
  width: 86px;
  height: 18px;
  padding: 0 22px 0 6px;
  background: ${face};
`;

const ScrollThumb = styled.span`
  width: 17px;
  height: 16px;
  margin-right: 18px;
  background: #cdcdcd;
`;

const ScrollButton = styled.button`
  width: 9px;
  height: 9px;
  border: 0;
  background: none;
`;

/* ---------- properties palette ---------- */

const Palette = styled.aside`
  display: flex;
  flex-direction: column;
  width: 232px;
  padding: 0 10px 10px 11px;
  border-left: 2px solid ${face};
  background: #ebebeb;
  box-shadow: inset 2px 0 0 #8a8a8a;
`;

const PaletteHead = styled.div`
  display: flex;
  align-items: center;
  gap: 4px;
  height: 23px;
  margin-right: -3px;
`;

const TinyButton = styled.button`
  display: grid;
  place-items: center;
  width: 10px;
  height: 10px;
  border: 1px solid #b0b0b0;
  background: #fff;
`;

const PaletteGrip = styled.span`
  flex: 1;
  height: 6px;
  border: 1px solid ${edge};
  border-top-color: #fff;
  border-left: 0;
  background: linear-gradient(#ebebeb 0 1px, ${edge} 1px 2px, #fff 2px 3px, #ebebeb 3px);
`;

const Chooser = styled.div`
  display: flex;
  align-items: center;
  gap: 5px;
  height: 27px;
  padding-left: 1px;
  margin-bottom: 12px;
`;

const Choice = styled.label`
  position: relative;
  width: 130px;
  height: 25px;
  svg { position: absolute; right: 4px; top: 9px; pointer-events: none; }
`;

const ChoiceSelect = styled.select`
  width: 100%;
  height: 25px;
  padding-left: 3px;
  border: 1px solid #ababab;
  appearance: none;
  background: #fff;
`;

const ChoiceTools = styled.div`
  display: flex;
  border: 1px solid #bdbdbd;
`;

const ChoiceTool = styled.button`
  display: grid;
  place-items: center;
  width: 24px;
  height: 23px;
  border: 0;
  background: none;
  & + & { border-left: 1px solid #bdbdbd; }
`;

const Group = styled.section`
  width: 197px;
  margin: 0 0 12px 3px;
`;

const GroupHead = styled.button`
  display: flex;
  align-items: flex-start;
  justify-content: space-between;
  width: 100%;
  height: 25px;
  padding: 5px 7px 0 7px;
  border: 0;
  background: #bfbfbf;
  clip-path: polygon(4px 0, calc(100% - 4px) 0, 100% 4px, 100% 100%, 0 100%, 0 4px);
  font: 700 12px/14px ${ui};
`;

const Sheet = styled.table`
  width: 181px;
  margin-left: 16px;
  table-layout: fixed;
  border-collapse: separate;
  border-spacing: 0;
`;

const Name = styled.th`
  width: 66px;
  height: 25px;
  padding: 0 0 4px 4px;
  border: 1px solid #bfbfbf;
  border-top: 0;
  overflow: hidden;
  white-space: nowrap;
  text-align: left;
  font-weight: 400;
`;

const Value = styled.td<{ $fixed?: boolean }>`
  height: 25px;
  padding: 0 0 0 2px;
  border: 1px solid #bfbfbf;
  border-top: 0;
  border-left: 0;
  background: ${p => (p.$fixed ? '#ebebeb' : '#fff')};
  white-space: nowrap;
`;

const ValueInput = styled.input`
  display: block;
  width: 100%;
  height: 18px;
  border: 0;
  background: none;
`;

const Sample = styled.span`
  display: flex;
  align-items: center;
  gap: 6px;
  padding-left: 1px;
`;

const Stroke = styled.span`
  width: 47px;
  height: 1px;
  margin-left: 2px;
  background: #000;
`;

const Info = styled.div`
  width: 197px;
  height: 49px;
  margin: auto 0 0 4px;
  border: 1px solid #bfbfbf;
`;

/* ---------- status bar ---------- */

const StatusBar = styled.footer`
  display: flex;
  align-items: center;
  gap: 4px;
  height: 32px;
  padding: 3px 3px 0 1px;
  border-top: 1px solid ${edge};
  border-bottom: 8px solid #000;
  background: ${face};
`;

const Coordinates = styled.output`
  width: 186px;
  height: 18px;
  padding-left: 1px;
  border: 1px solid ${edge};
  border-right-color: #ccc;
  border-bottom-color: #ccc;
  font: 10px/18px ${mono};
`;

const Toggle = styled.button<{ $on?: boolean; $latin?: boolean }>`
  height: 19px;
  padding: 1px 1px 0;
  border: 1px solid;
  border-color: ${p => (p.$on ? '#000 #fff #fff #000' : `#fff ${edge} ${edge} #fff`)};
  background: ${face};
  font: ${p => (p.$latin ? `10px/16px ${mono}` : `12px/16px ${song}`)};
  white-space: nowrap;
`;

const ScaleGroup = styled.div`
  display: flex;
  align-items: center;
  margin-left: auto;
  font: 12px/18px ${song};
`;

const ScaleButton = styled.button`
  display: flex;
  align-items: center;
  gap: 6px;
  margin: 0 7px 0 11px;
  border: 0;
  background: none;
  font: 10px/18px ${mono};
`;

const TrayButton = styled.button<{ $sunken?: boolean }>`
  display: grid;
  place-items: center;
  width: 24px;
  height: 20px;
  border: ${p => (p.$sunken ? '1px solid #909090' : '0')};
  border-right-color: #fff;
  border-bottom-color: #fff;
  background: none;
`;

const Down = ({ color = '#000' }: { color?: string }) => (
  <svg width="7" height="4" viewBox="0 0 7 4" aria-hidden="true"><path d="M0 0h7L3.500 4z" fill={color} /></svg>
);

/* ---------- content ---------- */

const menus = ['文件(F)', '编辑(E)', '视图(V)', '插入(I)', '格式(O)', '工具(T)', '绘图(D)', '标注(N)', '修改(M)', '窗口(W)', '帮助(H)'];

const standardTools = ['fresh', 'open', 'save', '|', 'print', 'preview', 'publish', 'web', '|', 'match', 'block', '|',
  'undo', 'caret', 'redo', 'caret', '|', 'properties', 'center', 'palettes', 'sheets', 'markup', 'calc', '|', 'help'];

const dimensionTools = ['linear', 'aligned', 'arcLength', 'ordinate', '|', 'radius', 'jogged', 'diameter', 'angular', '|',
  'quick', 'baseline', 'continued', 'space', 'breakDim', '|', 'tolerance', 'centerMark', 'inspect', 'jogLine', '|',
  'dimEdit', 'dimTextEdit', 'dimUpdate'];

const drawTools = ['line', 'xline', 'pline', 'polygon', 'rect', 'arc', 'circle', 'revcloud', 'spline', 'ellipse',
  'ellipseArc', 'insert', 'makeBlock', 'point', 'hatch', 'gradient', 'region', 'table'];

const modifyTools = ['erase', 'copy', 'mirror', 'offset', 'array', 'move', 'rotate', 'scale', 'stretch', 'trim',
  'extend', 'breakPoint', 'breakGap', 'join', 'chamfer', 'fillet', 'explode'];

const orderTools = ['toFront', 'toBack', 'above', 'under'];

type Property = { name: string; value: string; kind?: 'fixed' | 'color' | 'line' };

const groups: { title: string; rows: Property[] }[] = [
  {
    title: '基本',
    rows: [
      { name: '颜色', value: 'ByLayer', kind: 'color' },
      { name: '图层', value: '0' },
      { name: '线型', value: 'ByLayer', kind: 'line' },
      { name: '线型比例', value: '1' },
      { name: '线宽', value: 'ByLayer', kind: 'line' },
      { name: '厚度', value: '0' },
    ],
  },
  { title: '三维效果', rows: [{ name: '材质', value: 'ByLayer' }, { name: '阴影显示', value: '投射和接收阴影' }] },
  {
    title: '打印样式',
    rows: [
      { name: '打印样式', value: '随颜色', kind: 'fixed' },
      { name: '打印样式表', value: '无' },
      { name: '打印表附...', value: '模型', kind: 'fixed' },
      { name: '打印表类型', value: '不可用', kind: 'fixed' },
    ],
  },
  {
    title: '视图',
    rows: [
      { name: '圆心 X ...', value: '0.353', kind: 'fixed' },
      { name: '圆心 Y 坐...', value: '0.83', kind: 'fixed' },
      { name: '圆心 Z 坐...', value: '0', kind: 'fixed' },
      { name: '高度', value: '2.8155', kind: 'fixed' },
      { name: '宽度', value: '5.2867', kind: 'fixed' },
    ],
  },
  { title: '其他', rows: [] },
];

const toggles = [
  { text: '捕捉' }, { text: '栅格' }, { text: '正交' }, { text: '极轴', on: true }, { text: '对象捕捉', on: true },
  { text: '对象追踪', on: true }, { text: 'DUCS', on: true, latin: true }, { text: 'DYN', on: true, latin: true },
  { text: '线宽' }, { text: '模型', on: true },
];

const PropertyValue = ({ row }: { row: Property }) => {
  if (row.kind === 'color') return <Sample><Swatch />{row.value}</Sample>;
  if (row.kind === 'line') return <Sample><Stroke />{row.value}</Sample>;
  if (row.kind === 'fixed') return <>{row.value}</>;
  return <ValueInput aria-label={row.name} defaultValue={row.value} />;
};

const Drawing = () => (
  <Canvas viewBox="98 101 957 688" preserveAspectRatio="xMidYMid slice" role="img" aria-label="Drawing1">
    <g fill="none" stroke="#fff" shapeRendering="crispEdges">
      <path d="M490 224.500H735L856.500 436 735 647.500H490L368.500 436z" />
      <path d="M259.500 102V789M98 691.500H1055M254.500 686.500h10v10h-10z" />
      <path d="M483.500 641.500h13v13h-13zM490.500 567v88M484 647.500h90" />
      <path d="M490.500 566l-6 15.500h12zM572 647.500l-15.500-6v12z" />
    </g>
    <path d="M490.500 568v13M488 576v5M493 576v5M557 645h6M557 650h6" stroke="#777" />
    <g fill="#fff" fontFamily="Lato" fontWeight="300" fontSize="22">
      <text x="485" y="554">Y</text>
      <text x="584" y="656">X</text>
    </g>
  </Canvas>
);

const Slash = () => (
  <svg width="9" height="14" viewBox="0 0 9 14" aria-hidden="true">
    <path d="M1 14L7.500 0" stroke="#444" />
  </svg>
);

export default function App() {
  return (
    <Frame>
      <GlobalStyle />
      <TitleBar>
        <Title>AutoCAD 2008 - [Drawing1.dwg]</Title>
        <AppMark width="14" height="16" viewBox="0 0 14 16" aria-hidden="true">
          <path d="M0 .5h13.500v15H0" fill="#168a7d" stroke="#e5f4f2" />
          <path d="M0 5l2-2 4 7M1 8h4" fill="none" stroke="#fff" strokeWidth="1.500" />
          <path d="M8.500 6v9M4 11.500h9M6.500 9.500h4v4h-4z" fill="none" stroke="#fff" />
        </AppMark>
        <WindowButtons>
          <WindowButton aria-label="minimize">
            <svg width="9" height="9" viewBox="0 0 9 9"><path d="M0 6h8v2H0z" fill="#111" /></svg>
          </WindowButton>
          <WindowButton aria-label="restore">
            <svg width="11" height="11" viewBox="0 0 11 11">
              <path d="M.5 3.500h7v6h-7zM.5 3h7M2.500 2V.5h7.500V8H8" fill="none" stroke="#111" />
            </svg>
          </WindowButton>
          <WindowButton $close aria-label="close">
            <svg width="8" height="8" viewBox="0 0 8 8"><path d="M1 1l6 6M7 1L1 7" stroke="#fff" strokeWidth="1.800" /></svg>
          </WindowButton>
        </WindowButtons>
      </TitleBar>

      <MenuBar>
        <Menus>
          <Glyph name="document" />
          {menus.map(item => <MenuItem key={item}>{item}</MenuItem>)}
        </Menus>
        <HelpField aria-label="help" placeholder="键入问题以获取帮助" />
        <InfoButtons>
          <InfoButton $wide aria-label="search"><Glyph name="search" /><svg width="12" height="16" viewBox="0 0 12 16"><path d="M5 7h5L7.500 9.500z" fill="#333" /></svg></InfoButton>
          <InfoButton aria-label="communication"><Glyph name="satellite" size={14} /></InfoButton>
          <InfoButton aria-label="favorites"><Glyph name="star" size={14} /></InfoButton>
        </InfoButtons>
        <MdiButton aria-label="minimize drawing">
          <svg width="9" height="9" viewBox="0 0 9 9"><path d="M2 6h6v2H2z" fill="#5c7089" /></svg>
        </MdiButton>
        <MdiButton aria-label="restore drawing">
          <svg width="9" height="9" viewBox="0 0 9 9"><path d="M.5 4.500h5v3h-5zM.5 4h5M2.500 3V1.500h6V5H7" fill="none" stroke="#5c7089" /></svg>
        </MdiButton>
        <MdiButton aria-label="close drawing">
          <svg width="9" height="9" viewBox="0 0 9 9"><path d="M1.500 1.500l6 6M7.500 1.500l-6 6" stroke="#5c7089" strokeWidth="2" /></svg>
        </MdiButton>
      </MenuBar>

      <ToolRow>
        <Bar $tail={3}>
          <Grip />
          <Tools items={standardTools} />
        </Bar>
        <Bar $tail={3}>
          <Grip $inner />
          <Tool aria-label="text style"><Glyph name="textStyle" /></Tool>
          <Combo label="text style name" value="Standard" />
          <Divider $tight />
          <Tool aria-label="dimension style"><Glyph name="dimStyle" /></Tool>
          <Combo label="dimension style name" value="ISO-25" />
          <Divider $tight />
          <Tool aria-label="table style"><Glyph name="tableStyle" /></Tool>
          <Combo label="table style name" value="Standard" indent={3} />
          <Divider $tight />
          <Tool aria-label="leader style"><Glyph name="leaderStyle" /></Tool>
          <Combo label="leader style name" value="Standard" />
        </Bar>
      </ToolRow>

      <ToolRow>
        <Bar $tail={4}>
          <Grip />
          <Tool aria-label="layers"><Glyph name="layers" /></Tool>
          <Combo label="layer" value="0" width={298} indent={4}>
            <Glyph name="bulb" /><Glyph name="sun" /><Glyph name="freeze" /><Glyph name="unlock" /><Swatch />
          </Combo>
          <Tools items={['layerCurrent', 'layerPrevious', 'layerStates']} />
        </Bar>
        <Bar $tail={4}>
          <Grip $inner />
          <Tools items={dimensionTools} />
          <Divider $tight />
          <Combo label="dimension style" value="ISO-25" />
          <Tool aria-label="dimension styles"><Glyph name="dimStyle" /></Tool>
        </Bar>
      </ToolRow>

      <Body>
        <Desk>
          <Workspace>
            <Thumbs>
              <Thumb>
                <ThumbPicture viewBox="0 0 93 51" aria-hidden="true">
                  <path d="M37 8.500h24.500L73.500 25 61.500 41.500H37L24.500 25z" fill="none" stroke="#a3a8ae" />
                </ThumbPicture>
                <ThumbCaption>
                  <svg width="7" height="7" viewBox="0 0 7 7"><path d="M0 0h7v7H0z" fill="#3a9a34" /><path d="M1 2.500h5M3 4.500h2" stroke="#fff" /></svg>
                  Drawing1
                </ThumbCaption>
              </Thumb>
            </Thumbs>
            <DrawingWindow>
              <Drawing />
              <LayoutTabs>
                {['M3.500 1v8M9 1v8L5 5z', 'M8 1v8L4 5z', 'M3 1v8l4-4z', 'M8.500 1v8M2 1v8l5-4z'].map((d, i) => (
                  <TabNav key={d} aria-label={`layout step ${i + 1}`}>
                    <svg width="11" height="10" viewBox="0 0 11 10"><path d={d} fill="#555" stroke={d.includes('v8M') ? '#555' : 'none'} /></svg>
                  </TabNav>
                ))}
                <Tab $active>
                  <svg width="9" height="14" viewBox="0 0 9 14"><path d="M1 0h8v14H5z" fill="#000" /></svg>
                  <TabLabel $active>模型</TabLabel>
                  <svg width="11" height="14" viewBox="0 0 11 14"><path d="M0 0h10L4 14H0z" fill="#000" /><path d="M4 14L10 0" stroke="#888" /></svg>
                </Tab>
                <Tab><TabLabel>&nbsp;布局1</TabLabel>&nbsp;<Slash /></Tab>
                <Tab><TabLabel>布局2</TabLabel>&nbsp;<Slash /></Tab>
              </LayoutTabs>
            </DrawingWindow>
            <Docks>
              <DockColumn>
                <Dock>
                  <DockGrip />
                  {drawTools.map(name => <DockTool key={name} aria-label={name}><Glyph name={name} /></DockTool>)}
                  <DockTool>A</DockTool>
                </Dock>
              </DockColumn>
              <DockColumn>
                <Dock>
                  <DockGrip />
                  {modifyTools.map(name => <DockTool key={name} aria-label={name}><Glyph name={name} /></DockTool>)}
                </Dock>
                <Dock>
                  <DockGrip />
                  {orderTools.map(name => <DockTool key={name} aria-label={name}><Glyph name={name} /></DockTool>)}
                </Dock>
              </DockColumn>
            </Docks>
          </Workspace>
          <CommandPane>
            <CommandGrip />
            <CommandBox>
              <History>
                <div>
                  <HistoryLine><Prompt>命令: </Prompt>hexagon</HistoryLine>
                  <HistoryLine><Prompt>命令:</Prompt></HistoryLine>
                </div>
                <ScrollColumn>
                  <ScrollButton aria-label="scroll up"><Chevron color="#505050" turn={180} /></ScrollButton>
                  <ScrollButton aria-label="scroll down"><Chevron color="#505050" /></ScrollButton>
                </ScrollColumn>
              </History>
              <EntryRow>
                <Prompt>命令:</Prompt>
                <Entry aria-label="命令" />
                <HorizontalScroll>
                  <ScrollButton aria-label="scroll left"><Chevron color="#505050" turn={90} /></ScrollButton>
                  <ScrollThumb />
                  <ScrollButton aria-label="scroll right"><Chevron color="#505050" turn={-90} /></ScrollButton>
                </HorizontalScroll>
              </EntryRow>
            </CommandBox>
          </CommandPane>
        </Desk>

        <Palette>
          <PaletteHead>
            <TinyButton aria-label="collapse"><svg width="6" height="6" viewBox="0 0 6 6"><path d="M0 2h6v2H0z" /></svg></TinyButton>
            <PaletteGrip />
            <TinyButton aria-label="close palette"><svg width="6" height="6" viewBox="0 0 6 6"><path d="M.5.5l5 5M5.500.5l-5 5" stroke="#000" strokeWidth="1.600" /></svg></TinyButton>
          </PaletteHead>
          <Chooser>
            <Choice>
              <ChoiceSelect aria-label="selection" defaultValue="无选择"><option>无选择</option></ChoiceSelect>
              <Chevron color="#505050" />
            </Choice>
            <ChoiceTools>
              {['pick', 'select', 'quickSelect'].map(name => <ChoiceTool key={name} aria-label={name}><Glyph name={name} /></ChoiceTool>)}
            </ChoiceTools>
          </Chooser>
          {groups.map(group => (
            <Group key={group.title}>
              <GroupHead>
                {group.title}
                <svg width="9" height="10" viewBox="0 0 9 10" aria-hidden="true">
                  <path
                    d={group.rows.length ? 'M.5 4.500l4-3.500 4 3.500M.5 9l4-3.500 4 3.500' : 'M.5 1l4 3.500 4-3.500M.5 5.500l4 3.500 4-3.500'}
                    fill="none" stroke="#fff" strokeWidth="1.300"
                  />
                </svg>
              </GroupHead>
              {group.rows.length > 0 && (
                <Sheet>
                  <tbody>
                    {group.rows.map(row => (
                      <tr key={row.name}>
                        <Name scope="row">{row.name}</Name>
                        <Value $fixed={row.kind === 'fixed'}><PropertyValue row={row} /></Value>
                      </tr>
                    ))}
                  </tbody>
                </Sheet>
              )}
            </Group>
          ))}
          <Info />
        </Palette>
      </Body>

      <StatusBar>
        <Coordinates>-0.9448, -0.1787, 0.0000</Coordinates>
        {toggles.map(t => <Toggle key={t.text} $on={t.on} $latin={t.latin} aria-pressed={!!t.on}>{t.text}</Toggle>)}
        <ScaleGroup>
          注释比例:
          <ScaleButton aria-label="annotation scale">1:1 <Down /></ScaleButton>
          <TrayButton aria-label="annotation visibility"><Glyph name="annoBulb" size={14} /></TrayButton>
          <TrayButton aria-label="automatic scale"><Glyph name="annoOff" size={14} /></TrayButton>
          <TrayButton $sunken aria-label="lock toolbars"><Glyph name="lock" /></TrayButton>
          <TrayButton aria-label="status menu"><Down /></TrayButton>
          <svg width="17" height="17" viewBox="0 0 17 17" aria-hidden="true">
            <path d="M1 1h15v15H1z" fill="#fff" stroke="#16386a" strokeWidth="1.500" />
            <path d="M3.500 3.500h10v10h-10z" fill="#a9c9ee" stroke="#3b6ca8" />
          </svg>
        </ScaleGroup>
      </StatusBar>
    </Frame>
  );
}
